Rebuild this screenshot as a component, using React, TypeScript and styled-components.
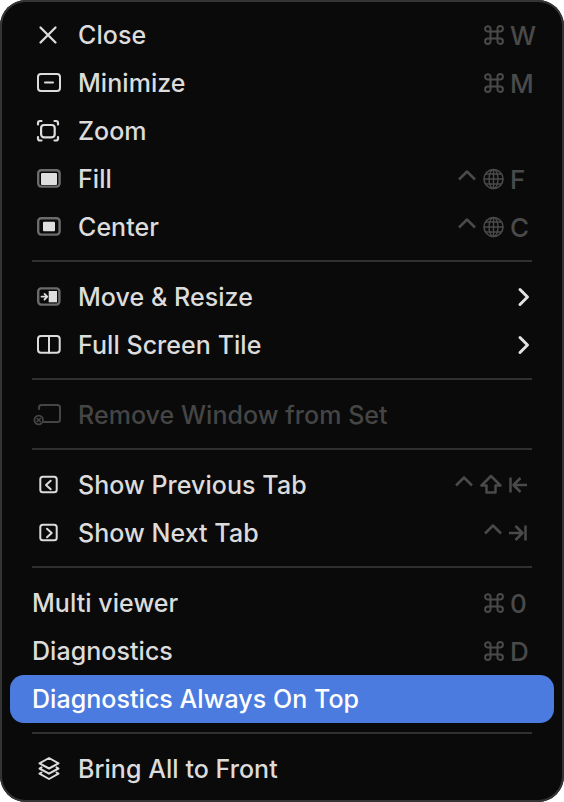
import React from "react"
import styled, { createGlobalStyle } from "styled-components"

const Global = createGlobalStyle`
html, body {
  margin: 0;
  padding: 0;
  background: #fff;
}
`

const Menu = styled.div`
  box-sizing: border-box;
  width: 564px;
  height: 802px;
  padding: 11px 10px 9px;
  background: #0a0a0a;
  border-radius: 26px;
  box-shadow: inset 0 0 0 2px #343434;
  font-family: Inter, "Liberation Sans", sans-serif;
  font-size: 25px;
  font-weight: 450;
  letter-spacing: 0.05px;
  overflow: hidden;
`

const Row = styled.div<{ $active?: boolean; $disabled?: boolean }>`
  display: flex;
  align-items: center;
  height: 48px;
  padding: 0 18px 0 22px;
  border-radius: 14px;
  background: ${(p) => (p.$active ? "#4c7be0" : "transparent")};
  color: ${(p) => (p.$active ? "#fff" : p.$disabled ? "#454545" : "#dcdcdc")};
`

const IconSlot = styled.span`
  flex: 0 0 46px;
  height: 32px;
`

const Glyph = styled.svg`
  display: block;
  width: 32px;
  height: 32px;
  fill: none;
  stroke: currentColor;
  stroke-width: 2;
  stroke-linecap: round;
  stroke-linejoin: round;
`

const Label = styled.span`
  flex: 1;
  white-space: nowrap;
`

const Shortcut = styled.span<{ $bare?: boolean }>`
  display: flex;
  align-items: center;
  margin-right: ${(p) => (p.$bare ? "9px" : "0")};
  color: #4a4a4a;
`

const Mods = styled.span`
  display: flex;
  align-items: center;
  gap: 7px;
`

const Key = styled.span`
  width: 26px;
  margin-left: 6px;
  font-size: 26px;
  letter-spacing: 0;
`

const Sym = styled.svg<{ $w: number }>`
  display: block;
  width: ${(p) => p.$w}px;
  height: 28px;
  fill: none;
  stroke: currentColor;
  stroke-width: 2.5;
  stroke-linejoin: round;
`

const Chevron = styled.svg`
  display: block;
  width: 16px;
  height: 24px;
  margin-right: 3px;
  fill: none;
  stroke: #e2e2e2;
  stroke-width: 3;
  stroke-linecap: round;
  stroke-linejoin: round;
`

const Separator = styled.div`
  height: 2px;
  margin: 9px 22px 11px;
  background: #303030;
`

const CloseIcon = () => (
  <Glyph viewBox="0 0 32 32">
    <path d="M8.5 8.5l15 15M23.5 8.5l-15 15" strokeWidth="2.3" />
  </Glyph>
)

const MinimizeIcon = () => (
  <Glyph viewBox="0 0 32 32">
    <rect x="6" y="7" width="22" height="17" rx="3" />
    <path d="M13 15.500h8" />
  </Glyph>
)

const ZoomIcon = () => (
  <Glyph viewBox="0 0 32 32">
    <rect x="9.100" y="10" width="13.600" height="12.300" rx="3" strokeWidth="2.200" />
    <path d="M6 9.500V8q0-2 2-2h1.500M22.500 6H24q2 0 2 2v1.500M6 22v1.500q0 2 2 2h1.500M22.500 25.500H24q2 0 2-2V22" strokeWidth="2.200" />
  </Glyph>
)

const FillIcon = () => (
  <Glyph viewBox="0 0 32 32">
    <rect x="6.200" y="7.200" width="21.400" height="16.400" rx="3" stroke="#6b6b6b" strokeWidth="2.400" />
    <rect x="9" y="10" width="16" height="12" rx="1" fill="#dedede" stroke="none" />
  </Glyph>
)

const CenterIcon = () => (
  <Glyph viewBox="0 0 32 32">
    <rect x="6.200" y="7.200" width="21.400" height="16.400" rx="3" stroke="#6b6b6b" strokeWidth="2.400" />
    <rect x="11" y="10.700" width="12" height="9.500" rx="1" fill="#dedede" stroke="none" />
  </Glyph>
)

const MoveIcon = () => (
  <Glyph viewBox="0 0 32 32">
    <rect x="6.200" y="7.400" width="21.200" height="16.200" rx="3" stroke="#6b6b6b" strokeWidth="2.400" />
    <rect x="16.700" y="10" width="8.300" height="11.300" fill="#dedede" stroke="none" />
    <path d="M9.500 15.700h5.500M12.500 12.900l2.800 2.800-2.800 2.800" strokeWidth="1.800" />
  </Glyph>
)

const TileIcon = () => (
  <Glyph viewBox="0 0 32 32">
    <rect x="6" y="7" width="21.700" height="16.700" rx="3" />
    <path d="M17 7v16.700" />
  </Glyph>
)

const RemoveIcon = () => (
  <Glyph viewBox="0 0 32 32">
    <path d="M7 10V8.500q0-2.500 2.500-2.500h16q2.500 0 2.500 2.500v12q0 2.500-2.500 2.500H12" />
    <circle cx="6.700" cy="21" r="4.300" strokeWidth="1.800" />
    <path d="M4.900 19.200l3.600 3.600M8.500 19.200l-3.600 3.600" strokeWidth="1.500" />
  </Glyph>
)

const PrevIcon = () => (
  <Glyph viewBox="0 0 32 32">
    <rect x="8.300" y="7.700" width="16.400" height="15.600" rx="2.500" />
    <path d="M18.700 11.700L14 16l4.700 4.300" />
  </Glyph>
)

const NextIcon = () => (
  <Glyph viewBox="0 0 32 32">
    <rect x="8.300" y="7.700" width="16.400" height="15.600" rx="2.500" />
    <path d="M15 11.700l4.700 4.300-4.700 4.300" />
  </Glyph>
)

const LayersIcon = () => (
  <Glyph viewBox="0 0 32 32">
    <path d="M17 5l9.500 5.300-9.500 5.200-9.500-5.200z" />
    <path d="M9.500 14.300l-2 1.200 9.500 5.200 9.500-5.200-2-1.200" />
    <path d="M9.500 19.500l-2 1.200 9.500 5.300 9.500-5.300-2-1.200" />
  </Glyph>
)

const Cmd = () => (
  <Sym $w={20} viewBox="0 0 20 28">
    <path d="M6.500 10.500h7v7h-7zM6.500 10.500h-2.200a2.700 2.700 0 1 1 2.200-2.700zM13.500 10.500v-2.700a2.700 2.700 0 1 1 2.700 2.700zM13.500 17.500h2.700a2.700 2.700 0 1 1-2.700 2.700zM6.500 17.500v2.700a2.700 2.700 0 1 1-2.700-2.700z" strokeWidth="2" />
  </Sym>
)

const Ctrl = () => (
  <Sym $w={18} viewBox="0 0 18 28">
    <path d="M1 14.500L9 6.500l8 8" />
  </Sym>
)

const Globe = () => (
  <Sym $w={21} viewBox="0 0 21 28">
    <circle cx="10.500" cy="14" r="9.500" strokeWidth="1.600" />
    <ellipse cx="10.500" cy="14" rx="4.500" ry="9.500" strokeWidth="1.400" />
    <path d="M10.500 4.500v19M1 14h19M2.500 9h16M2.500 19h16" strokeWidth="1.400" />
  </Sym>
)

const Shift = () => (
  <Sym $w={22} viewBox="0 0 22 28">
    <path d="M11 5L1.500 14.500h5v7h9v-7h5z" />
  </Sym>
)

const BackTab = () => (
  <Sym $w={18} viewBox="0 0 18 28">
    <path d="M1.500 6.500v15M18 14H4.500M11.500 7l-7 7 7 7" />
  </Sym>
)

const TabKey = () => (
  <Sym $w={18} viewBox="0 0 18 28">
    <path d="M16.500 6.500v15M0 14h13.500M6.500 7l7 7-7 7" />
  </Sym>
)

const Arrow = () => (
  <Chevron viewBox="0 0 16 24">
    <path d="M3 4.500l7.500 7.500L3 19.500" />
  </Chevron>
)

interface ItemProps {
  icon?: React.ReactNode
  label: string
  mods?: React.ReactNode
  keyName?: string
  more?: boolean
  active?: boolean
  disabled?: boolean
}

const Item = ({ icon, label, mods, keyName, more, active, disabled }: ItemProps) => (
  <Row $active={active} $disabled={disabled}>
    {icon && <IconSlot>{icon}</IconSlot>}
    <Label>{label}</Label>
    {mods && (
      <Shortcut $bare={!keyName}>
        <Mods>{mods}</Mods>
        {keyName && <Key>{keyName}</Key>}
      </Shortcut>
    )}
    {more && <Arrow />}
  </Row>
)

const App = () => (
  <>
    <Global />
    <Menu>
      <Item icon={<CloseIcon />} label="Close" mods={<Cmd />} keyName="W" />
      <Item icon={<MinimizeIcon />} label="Minimize" mods={<Cmd />} keyName="M" />
      <Item icon={<ZoomIcon />} label="Zoom" />
      <Item icon={<FillIcon />} label="Fill" mods={<><Ctrl /><Globe /></>} keyName="F" />
      <Item icon={<CenterIcon />} label="Center" mods={<><Ctrl /><Globe /></>} keyName="C" />
      <Separator />
      <Item icon={<MoveIcon />} label="Move & Resize" more />
      <Item icon={<TileIcon />} label="Full Screen Tile" more />
      <Separator />
      <Item icon={<RemoveIcon />} label="Remove Window from Set" disabled />
      <Separator />
      <Item icon={<PrevIcon />} label="Show Previous Tab" mods={<><Ctrl /><Shift /><BackTab /></>} />
      <Item icon={<NextIcon />} label="Show Next Tab" mods={<><Ctrl /><TabKey /></>} />
      <Separator />
      <Item label="Multi viewer" mods={<Cmd />} keyName="0" />
      <Item label="Diagnostics" mods={<Cmd />} keyName="D" />
      <Item label="Diagnostics Always On Top" active />
      <Separator />
      <Item icon={<LayersIcon />} label="Bring All to Front" />
    </Menu>
  </>
)

export default App
